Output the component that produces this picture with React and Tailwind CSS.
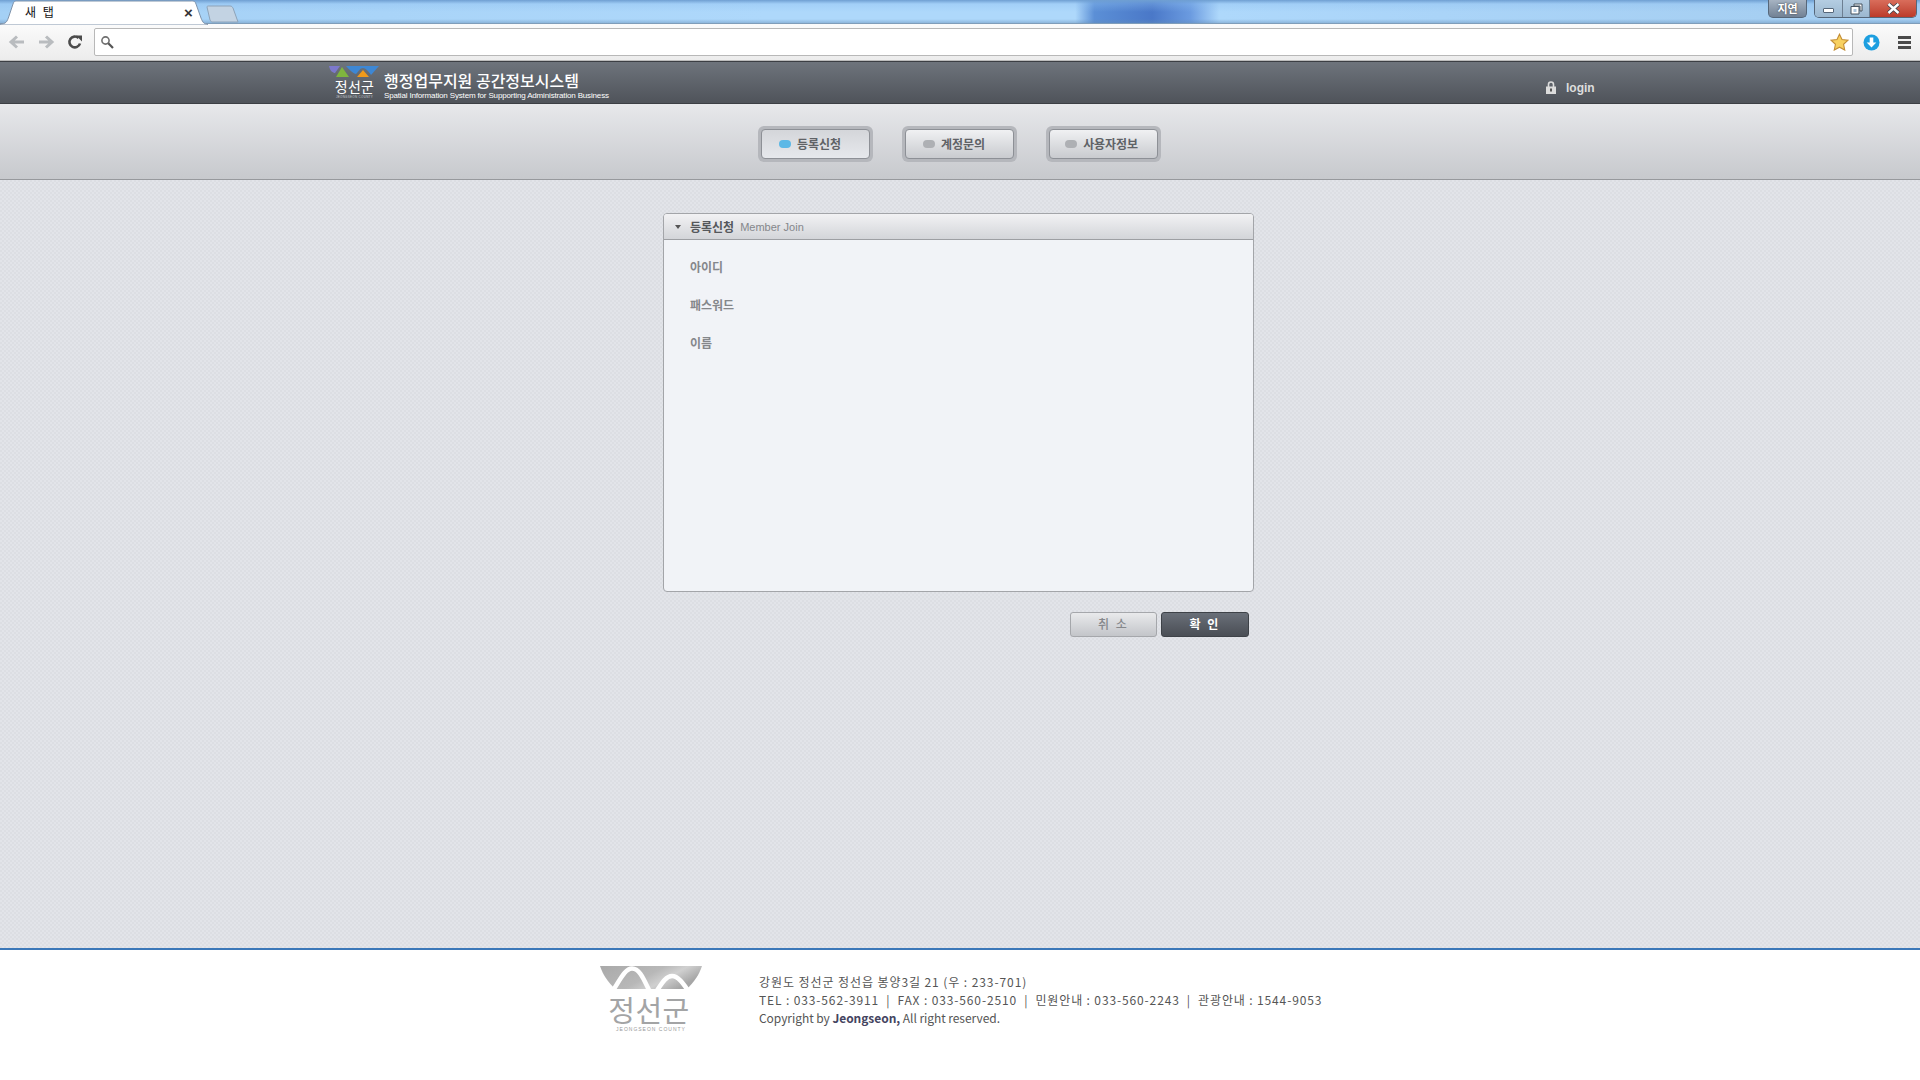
import React from "react";

const kr = "font-['Noto_Sans_CJK_KR','Noto_Sans',sans-serif]";

function NavBtn({ label, active, pad }) {
  return (
    <div className="w-[115px] h-9 rounded-[6px] bg-[#b5b7bc] p-[3px]">
      <div className={`h-full rounded-[4px] border border-[#8d9096] flex items-center justify-center gap-[6px] bg-gradient-to-b ${pad} ${active ? "from-[#d4d6da] to-[#e6e8ec]" : "from-[#f0f1f3] to-[#c9cbcf]"}`}>
        <span className={`w-3 h-2 rounded-[4px] ${active ? "bg-[#5cb8e6]" : "bg-[#aeb0b4]"}`} />
        <span className={`${kr} text-[12px] font-bold text-[#5f6266] tracking-[-0.1px]`}>{label}</span>
      </div>
    </div>
  );
}

function WindowBar() {
  return (
    <div className="h-6 flex items-start [background:linear-gradient(180deg,#6f9fd2_0,rgba(140,190,240,0.35)_4px,rgba(175,215,250,0)_12px,rgba(175,215,250,0)_19px,rgba(100,140,180,0.55)_24px),linear-gradient(90deg,#a4d0f5_0,#aed8fb_40%,#aed8fb_56%,#5b8fd6_57%,#4a78c8_60%,#6b9be0_62%,#aed8fb_63.5%,#aad4f8_75%,#a6cff2_92%,#a6d0f4_100%)] border-b border-[#7f9db9] relative">
      <div className="relative w-[208px] h-6 shrink-0 flex items-center">
        <svg className="absolute left-0 top-0" width="208" height="25" viewBox="0 0 208 25">
          <path d="M0 24 C6 24 7 22 9 16 L13 4 C14 1 15 1 18 1 L190 1 C194 1 195 1 196 4 L201 18 C203 23 204 24 208 24 L208 25 L0 25 Z" fill="#ffffff" stroke="#7f93ab" strokeWidth="1" />
        </svg>
        <span className={`relative ml-[25px] ${kr} text-[12px] text-[#111] tracking-[2px]`}>새 탭</span>
        <span className="absolute left-[184px] top-[3px] text-[15px] font-bold leading-[20px] text-[#333] font-['Liberation_Sans',sans-serif]">×</span>
      </div>
      <svg className="-ml-[2px] mt-[5px] shrink-0" width="34" height="19" viewBox="0 0 34 19">
        <path d="M1 2 C1 1 2 1 3 1 L24 1 C26 1 26 2 27 3 L32 17 L6 17 C5 17 5 16 4 15 Z" fill="#c3d3e3" stroke="#8ea3b8" />
      </svg>
      <div className="flex-1" />
      <div className="w-[39px] h-[18px] rounded-b-[5px] border border-t-0 border-[#56677a] bg-gradient-to-b from-[#a6b3c2] to-[#728295] flex items-center justify-center">
        <span className={`${kr} text-[11px] font-bold text-white leading-none [text-shadow:0_0_2px_#333]`}>지연</span>
      </div>
      <div className="ml-[7px] mr-[3px] flex h-[18px] w-[103px] rounded-b-[5px] border border-t-0 border-[#56677a] overflow-hidden">
        <div className="w-[28px] border-r border-[#6d7f92] bg-gradient-to-b from-[#b4cde2] to-[#9cb8d0] flex items-center justify-center">
          <div className="w-[11px] h-[5px] mt-1 bg-white border border-[#56677a] rounded-[1px]" />
        </div>
        <div className="w-[27px] border-r border-[#6d7f92] bg-gradient-to-b from-[#b4cde2] to-[#9cb8d0] flex items-center justify-center">
          <svg width="13" height="12" viewBox="0 0 13 12"><path d="M4 1h8v7h-2V3H4z M1 3.5h8v7.5H1z" fill="#fff" stroke="#44525f" strokeWidth="1" /><rect x="3.5" y="6" width="3" height="3" fill="#a8c2d9" /></svg>
        </div>
        <div className="flex-1 bg-gradient-to-b from-[#d96d5b] to-[#bb3a2a] flex items-center justify-center">
          <svg width="13" height="11" viewBox="0 0 13 11"><path d="M1.5 1 L11.5 10 M11.5 1 L1.5 10" stroke="#39414a" strokeWidth="4" /><path d="M1.5 1 L11.5 10 M11.5 1 L1.5 10" stroke="#fff" strokeWidth="2.4" /></svg>
        </div>
      </div>
    </div>
  );
}

function Toolbar() {
  return (
    <div className="h-[37px] bg-gradient-to-b from-[#fbfbfb] to-[#ececec] flex items-center border-b border-[#bdbdbd]">
      <div className="w-[94px] shrink-0 flex items-center pl-[8px] gap-[11px]">
        <svg width="18" height="16" viewBox="0 0 18 16"><path d="M16 8H4 M9 2.5 L3 8 L9 13.5" fill="none" stroke="#b9bcbf" strokeWidth="3" /></svg>
        <svg width="18" height="16" viewBox="0 0 18 16"><path d="M2 8H14 M9 2.5 L15 8 L9 13.5" fill="none" stroke="#b9bcbf" strokeWidth="3" /></svg>
        <svg width="16" height="16" viewBox="0 0 16 16" className="ml-[1px]"><path d="M13 9.5 A5.4 5.4 0 1 1 11.5 4" fill="none" stroke="#4b4b4b" strokeWidth="2.6" /><path d="M9 1.5 H15 V7.5 Z" fill="#4b4b4b" /></svg>
      </div>
      <div className="w-[1759px] h-[28px] bg-white border border-[#b8b8b8] rounded-[2px] flex items-center pl-[5px] pr-[3px] justify-between shrink-0">
        <svg width="14" height="14" viewBox="0 0 14 14"><circle cx="5.5" cy="5.5" r="3.6" fill="none" stroke="#6f6f6f" strokeWidth="1.6" /><path d="M8.3 8.3 L13 13" stroke="#555" strokeWidth="2.2" /></svg>
        <svg width="19" height="18" viewBox="0 0 24 23"><path d="M12 1.5 L15.2 8.4 L22.8 9.3 L17.2 14.4 L18.7 21.8 L12 18.1 L5.3 21.8 L6.8 14.4 L1.2 9.3 L8.8 8.4 Z" fill="#f8d160" stroke="#c48e36" strokeWidth="1.4" /></svg>
      </div>
      <div className="flex-1 flex items-center">
        <svg className="ml-[10px]" width="17" height="17" viewBox="0 0 17 17"><circle cx="8.5" cy="8.5" r="8" fill="#1d9fe0" /><path d="M6.7 3.5h3.6v5h3L8.5 13.5 3.7 8.5h3z" fill="#fff" /></svg>
        <div className="ml-[18px] flex flex-col gap-[2px]">
          <div className="w-[13px] h-[3px] bg-[#4a4a4a]" /><div className="w-[13px] h-[3px] bg-[#4a4a4a]" /><div className="w-[13px] h-[3px] bg-[#4a4a4a]" />
        </div>
      </div>
    </div>
  );
}

function HeaderLogo() {
  return (
    <div className="w-[51px] shrink-0 flex flex-col items-center">
      <svg width="51" height="12" viewBox="0 0 51 12">
        <path d="M0 0 H11 L6 7 C4 7 1 5 0 0 Z" fill="#7c78cc" />
        <path d="M13 1 L20 11 H7 Z" fill="#7fb53e" />
        <path d="M17 0 H50 L42 9 C40 6 37 2 34 2 C31 2 30 5 27 8 C23 7 20 3 17 0 Z" fill="#3d87d4" />
        <path d="M34 4 L40 11 H28 Z" fill="#f09a1a" />
      </svg>
      <span className={`${kr} text-[14px] text-white leading-[17px] tracking-[0.3px]`}>정선군</span>
      <span className="font-['Liberation_Sans',sans-serif] text-[3px] leading-[4px] tracking-[0.3px] text-[#c8ccd0] whitespace-nowrap">JEONGSEON COUNTY</span>
    </div>
  );
}

function Header() {
  return (
    <div className="h-[43px] bg-gradient-to-b from-[#6e747c] to-[#4f535a] border-y border-[#3c3f44] flex items-center">
      <div className="ml-[329px]"><HeaderLogo /></div>
      <div className="ml-[4px] flex flex-col w-[226px] mt-[5px]">
        <span className={`${kr} text-[16px] font-medium text-white leading-[20px]`}>행정업무지원 공간정보시스템</span>
        <span className="font-['Liberation_Sans',sans-serif] text-[8px] text-white leading-[10px] tracking-[-0.16px] whitespace-nowrap pt-[1px]">Spatial Information System for Supporting Administration Business</span>
      </div>
      <div className="ml-[936px] flex items-center gap-[10px] mt-[10px]">
        <svg width="10" height="13" viewBox="0 0 10 13"><path d="M2.5 6V3.5a2.5 2.5 0 0 1 5 0V6" fill="none" stroke="#dcdcdc" strokeWidth="1.6" /><rect x="0" y="5.5" width="10" height="7.5" fill="#dcdcdc" /><rect x="4" y="7.5" width="2" height="3" fill="#555" /></svg>
        <span className="font-['Liberation_Sans',sans-serif] text-[12px] font-bold text-[#dddddd]">login</span>
      </div>
    </div>
  );
}

function Panel() {
  return (
    <div className="w-[591px] h-[379px] rounded-[4px] border border-[#a3a5a9] bg-[#f1f3f7] flex flex-col overflow-hidden">
      <div className="h-[26px] shrink-0 bg-gradient-to-b from-[#f2f2f4] to-[#d3d5d9] border-b border-[#9d9fa3] flex items-center pl-[11px]">
        <span className="w-0 h-0 border-x-[3.5px] border-x-transparent border-t-[4px] border-t-[#555]" />
        <span className={`ml-[9px] ${kr} text-[12px] font-bold text-[#55585c]`}>등록신청</span>
        <span className="ml-[6px] mt-[1px] font-['Liberation_Sans',sans-serif] text-[11px] text-[#85878b]">Member Join</span>
      </div>
      <div className="pt-[18px] pl-[26px] flex flex-col gap-[20px]">
        {["아이디", "패스워드", "이름"].map((t) => (
          <div key={t} className={`${kr} h-[18px] text-[12px] leading-[18px] font-bold text-[#85878b]`}>{t}</div>
        ))}
      </div>
    </div>
  );
}

function FooterLogo() {
  return (
    <div className="w-[102px] shrink-0 flex flex-col items-center">
      <svg width="102" height="25" viewBox="0 0 102 25">
        <defs>
          <linearGradient id="fl" x1="0" y1="0" x2="1" y2="0.4">
            <stop offset="0" stopColor="#a9a9a9" />
            <stop offset="0.55" stopColor="#b8b8b8" />
            <stop offset="0.75" stopColor="#d0d0d0" />
            <stop offset="1" stopColor="#a6a6a6" />
          </linearGradient>
        </defs>
        <path d="M0 0 H102 C99 9 94 16 87 23 H15 C8 16 3 9 0 0 Z" fill="url(#fl)" />
        <path d="M12 26 C20 14 25 2.5 32 2.5 C40 2.5 44 14 50 26" fill="none" stroke="#fff" strokeWidth="4.5" />
        <path d="M56 26 C62 17 66 10 72 10 C78 10 83 17 89 26" fill="none" stroke="#fff" strokeWidth="4.5" />
        <path d="M0 23 H102 V25 H0 Z" fill="#fff" />
      </svg>
      <span className={`${kr} mt-[2px] -ml-[4px] text-[29px] leading-[33px] text-[#a3a4a5] tracking-[0.5px]`}>정선군</span>
      <span className="font-['Liberation_Sans',sans-serif] text-[5px] leading-[7px] tracking-[1px] text-[#999] whitespace-nowrap">JEONGSEON COUNTY</span>
    </div>
  );
}

export default function App() {
  return (
    <div className="w-[1920px] h-[1080px] overflow-hidden flex flex-col bg-white">
      <WindowBar />
      <Toolbar />
      <Header />
      <div className="h-[76px] bg-gradient-to-b from-[#e7e8eb] to-[#c7c9cd] border-b border-[#97999d] flex items-center justify-center gap-[29px] pt-[4px] pr-[2px]">
        <NavBtn label="등록신청" active pad="pr-[10px]" />
        <NavBtn label="계정문의" pad="pr-[10px]" />
        <NavBtn label="사용자정보" pad="pr-[3px]" />
      </div>
      <main className="flex-1 bg-[#dfe1e6] bg-[repeating-conic-gradient(#dcdee3_0_25%,#e2e4e9_0_50%)] bg-[length:4px_4px] flex flex-col items-center pt-[33px]">
        <div className="-ml-[3px]"><Panel /></div>
        <div className="w-[591px] -ml-[3px] mt-5 flex justify-end gap-[4px] pr-[5px]">
          <button className={`w-[87px] h-[25px] pb-[1px] rounded-[3px] border border-[#a5a7ab] bg-gradient-to-b from-[#e9eaec] to-[#c3c5c9] ${kr} text-[12px] font-medium text-[#85878b] tracking-[2px]`}>취 소</button>
          <button className={`w-[88px] h-[25px] pb-[1px] rounded-[3px] border border-[#3e4248] bg-gradient-to-b from-[#6a7079] to-[#4a4e55] ${kr} text-[12px] font-bold text-white tracking-[2px]`}>확 인</button>
        </div>
      </main>
      <footer className="h-[132px] bg-white border-t-[2px] border-[#3b77b8] flex pl-[600px] pt-[16px]">
        <FooterLogo />
        <div className={`ml-[57px] pt-[7px] ${kr} text-[12px] leading-[18px] text-[#555] whitespace-nowrap`}>
          <div className="tracking-[0.92px]">강원도 정선군 정선읍 봉양3길 21 (우 : 233-701)</div>
          <div className="tracking-[0.87px]">TEL : 033-562-3911 &nbsp;|&nbsp; FAX : 033-560-2510 &nbsp;|&nbsp; 민원안내 : 033-560-2243 &nbsp;|&nbsp; 관광안내 : 1544-9053</div>
          <div className="tracking-[-0.05px]">Copyright by <b className="text-[#444460]">Jeongseon,</b> All right reserved.</div>
        </div>
      </footer>
    </div>
  );
}
